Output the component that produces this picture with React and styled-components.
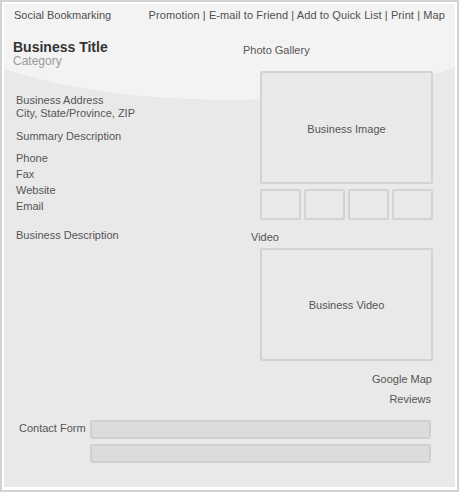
import React from "react";
import styled, { createGlobalStyle } from "styled-components";

const Global = createGlobalStyle`
  html, body { margin: 0; padding: 0; background: #fff; }
  body { font-family: "Liberation Sans", Arial, sans-serif; }
`;

const Frame = styled.div`
  box-sizing: border-box;
  width: 459px;
  height: 492px;
  border: 2px solid #d2d2d2;
  padding: 2px 2px 3px 2px;
  background: #fff;
  display: flex;
`;

const Panel = styled.div`
  flex: 1;
  display: flex;
  flex-direction: column;
  background: radial-gradient(ellipse 300px 93px at 224px 3px, #f3f3f3 99.4%, #e9e9e9 100%);
  color: #555;
  font-size: 11px;
`;

const Nav = styled.div`
  display: flex;
  justify-content: space-between;
  padding: 4px 10px 0 10px;
  line-height: 14px;
  color: #4f4f4f;
`;

const NavLinks = styled.span`
  letter-spacing: 0.1px;
`;

const Main = styled.div`
  display: grid;
  grid-template-columns: 1fr 189px;
  padding-right: 23px;
`;

const LeftCol = styled.div`
  display: flex;
  flex-direction: column;
  padding-left: 9px;
`;

const Title = styled.div`
  margin-top: 18px;
  font-size: 14px;
  font-weight: bold;
  line-height: 14px;
  color: #333;
`;

const Category = styled.div`
  font-size: 12px;
  line-height: 14px;
  color: #9a9a9a;
`;

const Info = styled.div`
  padding-left: 3px;
  margin-top: ${(p) => p.$mt}px;
  line-height: ${(p) => p.$lh || 13}px;
`;

const RightCol = styled.div`
  display: flex;
  flex-direction: column;
  align-items: flex-start;
`;

const Label = styled.div`
  line-height: 14px;
  margin-top: ${(p) => p.$mt}px;
  margin-left: ${(p) => p.$ml || 0}px;
  align-self: ${(p) => (p.$right ? "flex-end" : "flex-start")};
  margin-right: ${(p) => p.$mr || 0}px;
`;

const MediaBox = styled.div`
  box-sizing: border-box;
  width: 173px;
  height: 113px;
  margin-left: 17px;
  margin-top: ${(p) => p.$mt}px;
  border: 2px solid #d3d3d3;
  border-radius: 2px;
  background: #e9e9e9;
  display: flex;
  justify-content: center;
  align-items: ${(p) => (p.$top ? "flex-start" : "center")};
  padding-top: ${(p) => (p.$top ? 49 : 0)}px;
  line-height: 14px;
`;

const Thumbs = styled.div`
  display: grid;
  grid-template-columns: repeat(4, 41px);
  gap: 3px;
  margin-left: 17px;
  margin-top: 5px;
`;

const Thumb = styled.div`
  box-sizing: border-box;
  height: 31px;
  border: 2px solid #d3d3d3;
  border-radius: 2px;
`;

const Contact = styled.div`
  display: grid;
  grid-template-columns: 71px 341px;
  row-gap: 5px;
  padding-left: 15px;
  margin-top: 14px;
`;

const ContactLabel = styled.div`
  line-height: 14px;
  padding-top: 1px;
`;

const Field = styled.div`
  box-sizing: border-box;
  height: 19px;
  border: 2px solid #d0d0d0;
  border-radius: 3px;
  background: #dcdcdc;
  grid-column: 2;
`;

export default function App() {
  return (
    <>
      <Global />
      <Frame>
        <Panel>
          <Nav>
            <span>Social Bookmarking</span>
            <NavLinks>Promotion | E-mail to Friend | Add to Quick List | Print | Map</NavLinks>
          </Nav>
          <Main>
            <LeftCol>
              <Title>Business Title</Title>
              <Category>Category</Category>
              <Info $mt={25.5}>
                Business Address
                <br />
                City, State/Province, ZIP
              </Info>
              <Info $mt={10}>Summary Description</Info>
              <Info $mt={8.7} $lh={15.8}>
                Phone
                <br />
                Fax
                <br />
                Website
                <br />
                Email
              </Info>
              <Info $mt={14.5}>Business Description</Info>
            </LeftCol>
            <RightCol>
              <Label $mt={21}>Photo Gallery</Label>
              <MediaBox $mt={14} $top>
                Business Image
              </MediaBox>
              <Thumbs>
                <Thumb />
                <Thumb />
                <Thumb />
                <Thumb />
              </Thumbs>
              <Label $mt={10} $ml={8}>
                Video
              </Label>
              <MediaBox $mt={4}>Business Video</MediaBox>
              <Label $mt={10.5} $right $mr={0}>
                Google Map
              </Label>
              <Label $mt={6.5} $right $mr={1}>
                Reviews
              </Label>
            </RightCol>
          </Main>
          <Contact>
            <ContactLabel>Contact Form</ContactLabel>
            <Field />
            <Field />
          </Contact>
        </Panel>
      </Frame>
    </>
  );
}
